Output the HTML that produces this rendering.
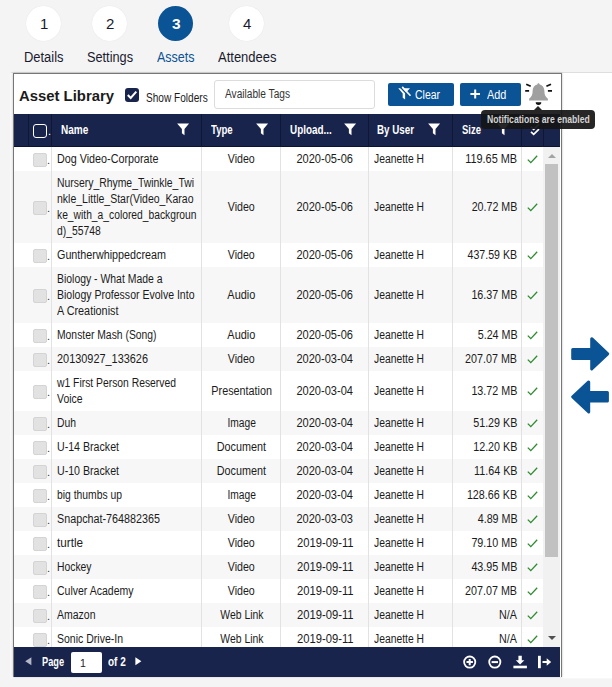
<!DOCTYPE html>
<html lang="en"><head><meta charset="utf-8"><title>Asset Library</title>
<style>
*{box-sizing:border-box;margin:0;padding:0}
html,body{width:612px;height:687px;overflow:hidden}
body{background:#f4f4f4;font-family:"Liberation Sans",sans-serif;color:#1d1d1d;position:relative}
.t{display:inline-block;white-space:pre}
.white{position:absolute;left:10px;top:72px;width:602px;height:607px;background:#fff;border-top:1px solid #dedede;border-bottom:1px solid #f8f8f8;border-left:2px solid #f9f9f9}
.step{position:absolute;top:6px;width:35px;height:35px;border-radius:50%;background:#fff;box-shadow:0 0 1px rgba(0,0,0,.12);text-align:center;line-height:36px;font-size:15px;color:#1a1a2e;padding-left:1.5px}
.step.on{background:#0a5394;box-shadow:none;color:#fff;font-weight:bold;font-size:15.5px}
.slabel{position:absolute;top:49px;font-size:14px;color:#1a1a2e;line-height:16px;white-space:nowrap}
.slabel.on{color:#0a5394}
.panel{position:absolute;left:13px;top:73px;width:549px;height:604px;background:#fff;border:1px solid #777;border-bottom:none;box-shadow:0 0 2px rgba(0,0,0,.28)}
.abs{position:absolute;white-space:nowrap}
.title{left:5px;top:11.8px;font-size:15.5px;font-weight:bold;color:#1b1b1b;line-height:20px}
.chk{position:absolute;left:111px;top:14px;width:14px;height:14px;background:#19244d;border-radius:3px}
.sf{left:131.7px;top:16px;font-size:12px;line-height:16px;color:#1b1b1b}
.tags{position:absolute;left:200px;top:6px;width:161px;height:29px;border:1px solid #dcdcdc;border-radius:3px;background:#fff;font-size:12px;line-height:27px;padding-left:10px;color:#333;white-space:nowrap}
.btn{position:absolute;top:9px;height:23px;background:#0a5394;border-radius:2px;color:#fff;font-size:12px;line-height:24px;white-space:nowrap}
.btn .t{position:absolute;top:0}
.thead{position:absolute;left:0;top:40px;width:546px;height:33px;background:#19244d;color:#fff;border-bottom:1px solid #0b1232}
.th{position:absolute;top:0;height:33px;border-left:1px solid #0f1735;font-size:12px;font-weight:bold;line-height:32px;white-space:nowrap}
.th svg{position:absolute;top:8.5px}
.tbody{position:absolute;left:0;top:73px;width:529px;height:500px;overflow:hidden;background:#fff}
.row{position:absolute;left:0;width:529px;background:#fff}
.row.alt{background:#f7f7f7}
.c{position:absolute;top:0;height:100%;border-left:1px solid #e2e2e2;font-size:12px;line-height:16px;white-space:nowrap;display:flex;align-items:center;color:#1b1b1b}
.ln{height:16px}
.c0{left:0;width:15px;border-left:none}
.c1{left:14px;width:23px;border-left:none}
.c2{left:37px;width:150px;padding-left:5.3px}
.c3{left:187px;width:79px;justify-content:center;padding-left:1px}
.c4{left:266px;width:88px;justify-content:center;padding-left:1px}
.c5{left:354px;width:84px;padding-left:5.3px}
.c6{left:438px;width:69px;justify-content:flex-end;padding-right:3.5px}
.c7{left:507px;width:22px;justify-content:center}
.cb{position:absolute;left:5px;top:50%;margin-top:-6px;width:14px;height:14px;background:#e2e2e2;border:1px solid #d4d4d4;border-radius:2px}
.dot{position:absolute;left:19px;top:50%;margin-top:-7.5px;font-size:11px;line-height:16px;color:#333}
.sbar{position:absolute;left:529px;top:73px;width:17px;height:500px;background:#f1f1f1}
.thumb{position:absolute;left:2px;top:17px;width:13px;height:393px;background:#c1c1c1}
.foot{position:absolute;left:0;top:573px;width:546px;height:30px;background:#19244d;color:#fff;font-size:12px;font-weight:bold;line-height:30px}
.foot .t{position:absolute;top:0}
.pg{position:absolute;left:56.5px;top:5px;width:31px;height:21px;background:#fff;border-radius:2px;color:#222;font-weight:normal;font-size:10.5px;line-height:23px;padding-left:9.5px}
.tip{position:absolute;left:481px;top:110px;width:114px;height:19px;background:rgba(22,22,22,.93);border-radius:4px;color:#d4d4d4;font-size:10px;font-weight:bold;line-height:19px;white-space:nowrap}
.tip .t{position:absolute;left:6px;top:0}
.tip:before{content:"";position:absolute;left:53px;top:-4px;border:4.5px solid transparent;border-top:none;border-bottom:4px solid rgba(22,22,22,.93)}
</style></head><body>
<div class="white"></div>
<div class="step" style="left:26px">1</div>
<div class="step" style="left:92px">2</div>
<div class="step on" style="left:158px">3</div>
<div class="step" style="left:229px">4</div>
<div class="slabel" style="left:24px"><span class="t" style="transform:scaleX(0.9230);transform-origin:left center;">Details</span></div>
<div class="slabel" style="left:87px"><span class="t" style="transform:scaleX(0.9092);transform-origin:left center;">Settings</span></div>
<div class="slabel on" style="left:157px"><span class="t" style="transform:scaleX(0.8925);transform-origin:left center;">Assets</span></div>
<div class="slabel" style="left:218px"><span class="t" style="transform:scaleX(0.9277);transform-origin:left center;">Attendees</span></div>
<div class="panel">
<div class="abs title"><span class="t" style="transform:scaleX(0.9588);transform-origin:left center;">Asset Library</span></div>
<div class="chk"><svg width="14" height="14" viewBox="0 0 14 14"><path d="M2.8 7 L5.7 10 L11.3 3.7" fill="none" stroke="#fff" stroke-width="2"/></svg></div>
<div class="abs sf"><span class="t" style="transform:scaleX(0.8409);transform-origin:left center;">Show Folders</span></div>
<div class="tags"><span class="t" style="transform:scaleX(0.8447);transform-origin:left center;">Available Tags</span></div>
<div class="btn" style="left:374px;width:66px"><span class="t" style="transform:scaleX(0.8715);transform-origin:left center;left:27.4px">Clear</span><svg style="position:absolute;left:8px;top:1px" width="18" height="18" viewBox="0 0 18 18"><path d="M2.3 4.3 H14 L9.1 9.6 V15.6 L6.7 13.8 V9.6 Z" fill="#fff"/><path d="M4.4 3.2 L13.4 12.75" stroke="#0a5394" stroke-width="1.5"/><path d="M6.2 2.9 L14.5 11.7" stroke="#fff" stroke-width="1.6"/></svg></div>
<div class="btn" style="left:446px;width:61px"><span class="t" style="transform:scaleX(0.9083);transform-origin:left center;left:26.7px">Add</span><svg style="position:absolute;left:10px;top:6px" width="11" height="11" viewBox="0 0 11 11"><path d="M5.2 0.4 V9.4 M0.4 4.9 H10" stroke="#fff" stroke-width="2"/></svg></div>
<svg style="position:absolute;left:508px;top:6px" width="36" height="28" viewBox="0 0 36 28"><path d="M15.3 4.6 C15.3 3.8 15.8 3.2 16.5 3.2 C17.2 3.2 17.7 3.8 17.7 4.6 C20.6 5.3 22.4 7.8 22.4 11 C22.4 14.5 23 16.4 25.9 18.8 L25.9 20.6 L7.1 20.6 L7.1 18.8 C10 16.4 10.6 14.5 10.6 11 C10.6 7.8 12.4 5.3 15.3 4.6 Z" fill="#a0a0a0"/><path d="M13.7 22.2 H19.3 A2.8 2.7 0 0 1 13.7 22.2 Z" fill="#111"/><path d="M3.2 10.9 H7.1 M25.9 10.9 H30 M4.2 4.2 L8.7 6.3 M24.4 6.3 L29 4.2" stroke="#111" stroke-width="1.7" fill="none"/></svg>
<div class="thead">
<div class="th" style="left:0;width:15px;border-left:none"></div>
<div class="th" style="left:14px;width:23px"><span style="position:absolute;left:4px;top:10px;width:14px;height:14px;border:1.5px solid #fff;border-radius:3px"></span><span style="position:absolute;left:19px;top:0.5px;font-weight:normal;font-size:11px">.</span></div>
<div class="th" style="left:37px;width:150px;padding-left:9px"><span class="t" style="transform:scaleX(0.8352);transform-origin:left center;">Name</span><svg style="left:124.7px" width="13" height="13" viewBox="0 0 13 13"><path d="M0.1 0.4 H12.1 L7.5 5.9 V12.2 L4.9 10.2 V5.9 Z" fill="#fff"/></svg></div>
<div class="th" style="left:187px;width:79px;padding-left:9px"><span class="t" style="transform:scaleX(0.8000);transform-origin:left center;">Type</span><svg style="left:54px" width="13" height="13" viewBox="0 0 13 13"><path d="M0.1 0.4 H12.1 L7.5 5.9 V12.2 L4.9 10.2 V5.9 Z" fill="#fff"/></svg></div>
<div class="th" style="left:266px;width:88px;padding-left:9px"><span class="t" style="transform:scaleX(0.8229);transform-origin:left center;">Upload...</span><svg style="left:63px" width="13" height="13" viewBox="0 0 13 13"><path d="M0.1 0.4 H12.1 L7.5 5.9 V12.2 L4.9 10.2 V5.9 Z" fill="#fff"/></svg></div>
<div class="th" style="left:354px;width:84px;padding-left:8.3px"><span class="t" style="transform:scaleX(0.8157);transform-origin:left center;">By User</span><svg style="left:59.3px" width="13" height="13" viewBox="0 0 13 13"><path d="M0.1 0.4 H12.1 L7.5 5.9 V12.2 L4.9 10.2 V5.9 Z" fill="#fff"/></svg></div>
<div class="th" style="left:438px;width:69px;padding-left:8.7px"><span class="t" style="transform:scaleX(0.7912);transform-origin:left center;">Size</span><svg style="left:44px" width="13" height="13" viewBox="0 0 13 13"><path d="M0.1 0.4 H12.1 L7.5 5.9 V12.2 L4.9 10.2 V5.9 Z" fill="#fff"/></svg></div>
<div class="th" style="left:507px;width:22px"><svg style="left:7.5px;top:9px" width="11" height="13" viewBox="0 0 11 13"><path d="M1 3.8 L3.7 6.4 L9 1.2 M1 8.8 L3.7 11.4 L9 6.2" fill="none" stroke="#fff" stroke-width="1.7"/></svg></div>
<div class="th" style="left:529px;width:17px"></div>
</div>
<div class="tbody">
<div class="row" style="top:0px;height:24px"><div class="c c0"></div><div class="c c1"><span class="cb"></span><span class="dot">.</span></div><div class="c c2"><div><div class="ln"><span class="t" style="transform:scaleX(0.8967);transform-origin:left center;">Dog Video-Corporate</span></div></div></div><div class="c c3"><span class="t" style="transform:scaleX(0.8857);transform-origin:center center;">Video</span></div><div class="c c4"><span class="t" style="transform:scaleX(0.9220);transform-origin:center center;">2020-05-06</span></div><div class="c c5"><span class="t" style="transform:scaleX(0.8614);transform-origin:left center;">Jeanette H</span></div><div class="c c6"><span class="t" style="transform:scaleX(0.9098);transform-origin:right center;">119.65 MB</span></div><div class="c c7"><svg width="11" height="9" viewBox="0 0 11 9"><path d="M0.8 4.6 L3.8 7.6 L10.2 0.8" fill="none" stroke="#2e8b2e" stroke-width="1.3"/></svg></div></div>
<div class="row alt" style="top:24px;height:72px"><div class="c c0"></div><div class="c c1"><span class="cb"></span><span class="dot">.</span></div><div class="c c2"><div><div class="ln"><span class="t" style="transform:scaleX(0.8667);transform-origin:left center;">Nursery_Rhyme_Twinkle_Twi</span></div><div class="ln"><span class="t" style="transform:scaleX(0.8756);transform-origin:left center;">nkle_Little_Star(Video_Karao</span></div><div class="ln"><span class="t" style="transform:scaleX(0.8570);transform-origin:left center;">ke_with_a_colored_backgroun</span></div><div class="ln"><span class="t" style="transform:scaleX(0.8626);transform-origin:left center;">d)_55748</span></div></div></div><div class="c c3"><span class="t" style="transform:scaleX(0.8857);transform-origin:center center;">Video</span></div><div class="c c4"><span class="t" style="transform:scaleX(0.9220);transform-origin:center center;">2020-05-06</span></div><div class="c c5"><span class="t" style="transform:scaleX(0.8614);transform-origin:left center;">Jeanette H</span></div><div class="c c6"><span class="t" style="transform:scaleX(0.8905);transform-origin:right center;">20.72 MB</span></div><div class="c c7"><svg width="11" height="9" viewBox="0 0 11 9"><path d="M0.8 4.6 L3.8 7.6 L10.2 0.8" fill="none" stroke="#2e8b2e" stroke-width="1.3"/></svg></div></div>
<div class="row" style="top:96px;height:24px"><div class="c c0"></div><div class="c c1"><span class="cb"></span><span class="dot">.</span></div><div class="c c2"><div><div class="ln"><span class="t" style="transform:scaleX(0.8978);transform-origin:left center;">Guntherwhippedcream</span></div></div></div><div class="c c3"><span class="t" style="transform:scaleX(0.8857);transform-origin:center center;">Video</span></div><div class="c c4"><span class="t" style="transform:scaleX(0.9220);transform-origin:center center;">2020-05-06</span></div><div class="c c5"><span class="t" style="transform:scaleX(0.8614);transform-origin:left center;">Jeanette H</span></div><div class="c c6"><span class="t" style="transform:scaleX(0.8832);transform-origin:right center;">437.59 KB</span></div><div class="c c7"><svg width="11" height="9" viewBox="0 0 11 9"><path d="M0.8 4.6 L3.8 7.6 L10.2 0.8" fill="none" stroke="#2e8b2e" stroke-width="1.3"/></svg></div></div>
<div class="row alt" style="top:120px;height:56px"><div class="c c0"></div><div class="c c1"><span class="cb"></span><span class="dot">.</span></div><div class="c c2"><div><div class="ln"><span class="t" style="transform:scaleX(0.8691);transform-origin:left center;">Biology - What Made a</span></div><div class="ln"><span class="t" style="transform:scaleX(0.8772);transform-origin:left center;">Biology Professor Evolve Into</span></div><div class="ln"><span class="t" style="transform:scaleX(0.9038);transform-origin:left center;">A Creationist</span></div></div></div><div class="c c3"><span class="t" style="transform:scaleX(0.9120);transform-origin:center center;">Audio</span></div><div class="c c4"><span class="t" style="transform:scaleX(0.9220);transform-origin:center center;">2020-05-06</span></div><div class="c c5"><span class="t" style="transform:scaleX(0.8614);transform-origin:left center;">Jeanette H</span></div><div class="c c6"><span class="t" style="transform:scaleX(0.8950);transform-origin:right center;">16.37 MB</span></div><div class="c c7"><svg width="11" height="9" viewBox="0 0 11 9"><path d="M0.8 4.6 L3.8 7.6 L10.2 0.8" fill="none" stroke="#2e8b2e" stroke-width="1.3"/></svg></div></div>
<div class="row" style="top:176px;height:24px"><div class="c c0"></div><div class="c c1"><span class="cb"></span><span class="dot">.</span></div><div class="c c2"><div><div class="ln"><span class="t" style="transform:scaleX(0.8623);transform-origin:left center;">Monster Mash (Song)</span></div></div></div><div class="c c3"><span class="t" style="transform:scaleX(0.9120);transform-origin:center center;">Audio</span></div><div class="c c4"><span class="t" style="transform:scaleX(0.9220);transform-origin:center center;">2020-05-06</span></div><div class="c c5"><span class="t" style="transform:scaleX(0.8614);transform-origin:left center;">Jeanette H</span></div><div class="c c6"><span class="t" style="transform:scaleX(0.8950);transform-origin:right center;">5.24 MB</span></div><div class="c c7"><svg width="11" height="9" viewBox="0 0 11 9"><path d="M0.8 4.6 L3.8 7.6 L10.2 0.8" fill="none" stroke="#2e8b2e" stroke-width="1.3"/></svg></div></div>
<div class="row alt" style="top:200px;height:24px"><div class="c c0"></div><div class="c c1"><span class="cb"></span><span class="dot">.</span></div><div class="c c2"><div><div class="ln"><span class="t" style="transform:scaleX(0.9090);transform-origin:left center;">20130927_133626</span></div></div></div><div class="c c3"><span class="t" style="transform:scaleX(0.8857);transform-origin:center center;">Video</span></div><div class="c c4"><span class="t" style="transform:scaleX(0.9220);transform-origin:center center;">2020-03-04</span></div><div class="c c5"><span class="t" style="transform:scaleX(0.8614);transform-origin:left center;">Jeanette H</span></div><div class="c c6"><span class="t" style="transform:scaleX(0.8950);transform-origin:right center;">207.07 MB</span></div><div class="c c7"><svg width="11" height="9" viewBox="0 0 11 9"><path d="M0.8 4.6 L3.8 7.6 L10.2 0.8" fill="none" stroke="#2e8b2e" stroke-width="1.3"/></svg></div></div>
<div class="row" style="top:224px;height:40px"><div class="c c0"></div><div class="c c1"><span class="cb"></span><span class="dot">.</span></div><div class="c c2"><div><div class="ln"><span class="t" style="transform:scaleX(0.8620);transform-origin:left center;">w1 First Person Reserved</span></div><div class="ln"><span class="t" style="transform:scaleX(0.8685);transform-origin:left center;">Voice</span></div></div></div><div class="c c3"><span class="t" style="transform:scaleX(0.9015);transform-origin:center center;">Presentation</span></div><div class="c c4"><span class="t" style="transform:scaleX(0.9220);transform-origin:center center;">2020-03-04</span></div><div class="c c5"><span class="t" style="transform:scaleX(0.8614);transform-origin:left center;">Jeanette H</span></div><div class="c c6"><span class="t" style="transform:scaleX(0.8950);transform-origin:right center;">13.72 MB</span></div><div class="c c7"><svg width="11" height="9" viewBox="0 0 11 9"><path d="M0.8 4.6 L3.8 7.6 L10.2 0.8" fill="none" stroke="#2e8b2e" stroke-width="1.3"/></svg></div></div>
<div class="row alt" style="top:264px;height:24px"><div class="c c0"></div><div class="c c1"><span class="cb"></span><span class="dot">.</span></div><div class="c c2"><div><div class="ln"><span class="t" style="transform:scaleX(0.8630);transform-origin:left center;">Duh</span></div></div></div><div class="c c3"><span class="t" style="transform:scaleX(0.8543);transform-origin:center center;">Image</span></div><div class="c c4"><span class="t" style="transform:scaleX(0.9220);transform-origin:center center;">2020-03-04</span></div><div class="c c5"><span class="t" style="transform:scaleX(0.8614);transform-origin:left center;">Jeanette H</span></div><div class="c c6"><span class="t" style="transform:scaleX(0.8950);transform-origin:right center;">51.29 KB</span></div><div class="c c7"><svg width="11" height="9" viewBox="0 0 11 9"><path d="M0.8 4.6 L3.8 7.6 L10.2 0.8" fill="none" stroke="#2e8b2e" stroke-width="1.3"/></svg></div></div>
<div class="row" style="top:288px;height:24px"><div class="c c0"></div><div class="c c1"><span class="cb"></span><span class="dot">.</span></div><div class="c c2"><div><div class="ln"><span class="t" style="transform:scaleX(0.8853);transform-origin:left center;">U-14 Bracket</span></div></div></div><div class="c c3"><span class="t" style="transform:scaleX(0.9003);transform-origin:center center;">Document</span></div><div class="c c4"><span class="t" style="transform:scaleX(0.9220);transform-origin:center center;">2020-03-04</span></div><div class="c c5"><span class="t" style="transform:scaleX(0.8614);transform-origin:left center;">Jeanette H</span></div><div class="c c6"><span class="t" style="transform:scaleX(0.8950);transform-origin:right center;">12.20 KB</span></div><div class="c c7"><svg width="11" height="9" viewBox="0 0 11 9"><path d="M0.8 4.6 L3.8 7.6 L10.2 0.8" fill="none" stroke="#2e8b2e" stroke-width="1.3"/></svg></div></div>
<div class="row alt" style="top:312px;height:24px"><div class="c c0"></div><div class="c c1"><span class="cb"></span><span class="dot">.</span></div><div class="c c2"><div><div class="ln"><span class="t" style="transform:scaleX(0.8853);transform-origin:left center;">U-10 Bracket</span></div></div></div><div class="c c3"><span class="t" style="transform:scaleX(0.9003);transform-origin:center center;">Document</span></div><div class="c c4"><span class="t" style="transform:scaleX(0.9220);transform-origin:center center;">2020-03-04</span></div><div class="c c5"><span class="t" style="transform:scaleX(0.8614);transform-origin:left center;">Jeanette H</span></div><div class="c c6"><span class="t" style="transform:scaleX(0.8950);transform-origin:right center;">11.64 KB</span></div><div class="c c7"><svg width="11" height="9" viewBox="0 0 11 9"><path d="M0.8 4.6 L3.8 7.6 L10.2 0.8" fill="none" stroke="#2e8b2e" stroke-width="1.3"/></svg></div></div>
<div class="row" style="top:336px;height:24px"><div class="c c0"></div><div class="c c1"><span class="cb"></span><span class="dot">.</span></div><div class="c c2"><div><div class="ln"><span class="t" style="transform:scaleX(0.8622);transform-origin:left center;">big thumbs up</span></div></div></div><div class="c c3"><span class="t" style="transform:scaleX(0.8543);transform-origin:center center;">Image</span></div><div class="c c4"><span class="t" style="transform:scaleX(0.9220);transform-origin:center center;">2020-03-04</span></div><div class="c c5"><span class="t" style="transform:scaleX(0.8614);transform-origin:left center;">Jeanette H</span></div><div class="c c6"><span class="t" style="transform:scaleX(0.8950);transform-origin:right center;">128.66 KB</span></div><div class="c c7"><svg width="11" height="9" viewBox="0 0 11 9"><path d="M0.8 4.6 L3.8 7.6 L10.2 0.8" fill="none" stroke="#2e8b2e" stroke-width="1.3"/></svg></div></div>
<div class="row alt" style="top:360px;height:24px"><div class="c c0"></div><div class="c c1"><span class="cb"></span><span class="dot">.</span></div><div class="c c2"><div><div class="ln"><span class="t" style="transform:scaleX(0.8974);transform-origin:left center;">Snapchat-764882365</span></div></div></div><div class="c c3"><span class="t" style="transform:scaleX(0.8857);transform-origin:center center;">Video</span></div><div class="c c4"><span class="t" style="transform:scaleX(0.9220);transform-origin:center center;">2020-03-03</span></div><div class="c c5"><span class="t" style="transform:scaleX(0.8614);transform-origin:left center;">Jeanette H</span></div><div class="c c6"><span class="t" style="transform:scaleX(0.8950);transform-origin:right center;">4.89 MB</span></div><div class="c c7"><svg width="11" height="9" viewBox="0 0 11 9"><path d="M0.8 4.6 L3.8 7.6 L10.2 0.8" fill="none" stroke="#2e8b2e" stroke-width="1.3"/></svg></div></div>
<div class="row" style="top:384px;height:24px"><div class="c c0"></div><div class="c c1"><span class="cb"></span><span class="dot">.</span></div><div class="c c2"><div><div class="ln"><span class="t" style="transform:scaleX(0.9742);transform-origin:left center;">turtle</span></div></div></div><div class="c c3"><span class="t" style="transform:scaleX(0.8857);transform-origin:center center;">Video</span></div><div class="c c4"><span class="t" style="transform:scaleX(0.9355);transform-origin:center center;">2019-09-11</span></div><div class="c c5"><span class="t" style="transform:scaleX(0.8614);transform-origin:left center;">Jeanette H</span></div><div class="c c6"><span class="t" style="transform:scaleX(0.8950);transform-origin:right center;">79.10 MB</span></div><div class="c c7"><svg width="11" height="9" viewBox="0 0 11 9"><path d="M0.8 4.6 L3.8 7.6 L10.2 0.8" fill="none" stroke="#2e8b2e" stroke-width="1.3"/></svg></div></div>
<div class="row alt" style="top:408px;height:24px"><div class="c c0"></div><div class="c c1"><span class="cb"></span><span class="dot">.</span></div><div class="c c2"><div><div class="ln"><span class="t" style="transform:scaleX(0.8622);transform-origin:left center;">Hockey</span></div></div></div><div class="c c3"><span class="t" style="transform:scaleX(0.8857);transform-origin:center center;">Video</span></div><div class="c c4"><span class="t" style="transform:scaleX(0.9355);transform-origin:center center;">2019-09-11</span></div><div class="c c5"><span class="t" style="transform:scaleX(0.8614);transform-origin:left center;">Jeanette H</span></div><div class="c c6"><span class="t" style="transform:scaleX(0.8950);transform-origin:right center;">43.95 MB</span></div><div class="c c7"><svg width="11" height="9" viewBox="0 0 11 9"><path d="M0.8 4.6 L3.8 7.6 L10.2 0.8" fill="none" stroke="#2e8b2e" stroke-width="1.3"/></svg></div></div>
<div class="row" style="top:432px;height:24px"><div class="c c0"></div><div class="c c1"><span class="cb"></span><span class="dot">.</span></div><div class="c c2"><div><div class="ln"><span class="t" style="transform:scaleX(0.8755);transform-origin:left center;">Culver Academy</span></div></div></div><div class="c c3"><span class="t" style="transform:scaleX(0.8857);transform-origin:center center;">Video</span></div><div class="c c4"><span class="t" style="transform:scaleX(0.9355);transform-origin:center center;">2019-09-11</span></div><div class="c c5"><span class="t" style="transform:scaleX(0.8614);transform-origin:left center;">Jeanette H</span></div><div class="c c6"><span class="t" style="transform:scaleX(0.8950);transform-origin:right center;">207.07 MB</span></div><div class="c c7"><svg width="11" height="9" viewBox="0 0 11 9"><path d="M0.8 4.6 L3.8 7.6 L10.2 0.8" fill="none" stroke="#2e8b2e" stroke-width="1.3"/></svg></div></div>
<div class="row alt" style="top:456px;height:24px"><div class="c c0"></div><div class="c c1"><span class="cb"></span><span class="dot">.</span></div><div class="c c2"><div><div class="ln"><span class="t" style="transform:scaleX(0.8744);transform-origin:left center;">Amazon</span></div></div></div><div class="c c3"><span class="t" style="transform:scaleX(0.8683);transform-origin:center center;">Web Link</span></div><div class="c c4"><span class="t" style="transform:scaleX(0.9355);transform-origin:center center;">2019-09-11</span></div><div class="c c5"><span class="t" style="transform:scaleX(0.8614);transform-origin:left center;">Jeanette H</span></div><div class="c c6"><span class="t" style="transform:scaleX(0.8950);transform-origin:right center;">N/A</span></div><div class="c c7"><svg width="11" height="9" viewBox="0 0 11 9"><path d="M0.8 4.6 L3.8 7.6 L10.2 0.8" fill="none" stroke="#2e8b2e" stroke-width="1.3"/></svg></div></div>
<div class="row" style="top:480px;height:24px"><div class="c c0"></div><div class="c c1"><span class="cb"></span><span class="dot">.</span></div><div class="c c2"><div><div class="ln"><span class="t" style="transform:scaleX(0.8758);transform-origin:left center;">Sonic Drive-In</span></div></div></div><div class="c c3"><span class="t" style="transform:scaleX(0.8683);transform-origin:center center;">Web Link</span></div><div class="c c4"><span class="t" style="transform:scaleX(0.9355);transform-origin:center center;">2019-09-11</span></div><div class="c c5"><span class="t" style="transform:scaleX(0.8614);transform-origin:left center;">Jeanette H</span></div><div class="c c6"><span class="t" style="transform:scaleX(0.8950);transform-origin:right center;">N/A</span></div><div class="c c7"><svg width="11" height="9" viewBox="0 0 11 9"><path d="M0.8 4.6 L3.8 7.6 L10.2 0.8" fill="none" stroke="#2e8b2e" stroke-width="1.3"/></svg></div></div>
</div>
<div class="sbar"><div class="thumb"></div>
<svg style="position:absolute;left:4.5px;top:7px" width="8" height="4" viewBox="0 0 8 4"><path d="M0 4 L4 0 L8 4Z" fill="#a3a3a3"/></svg>
<svg style="position:absolute;left:4.5px;top:488.5px" width="8" height="4" viewBox="0 0 8 4"><path d="M0 0 L4 4 L8 0Z" fill="#505050"/></svg>
</div>
<div class="foot">
<svg style="position:absolute;left:11px;top:10px" width="7" height="9" viewBox="0 0 7 9"><path d="M6.4 0.3 L0.2 4.3 L6.4 8.3Z" fill="#b4b8c6"/></svg>
<span class="t" style="transform:scaleX(0.7669);transform-origin:left center;left:28px">Page</span>
<div class="pg">1</div>
<span class="t" style="transform:scaleX(0.8340);transform-origin:left center;left:93.7px">of 2</span>
<svg style="position:absolute;left:121px;top:10px" width="7" height="9" viewBox="0 0 7 9"><path d="M0.4 0.3 L6.4 4.3 L0.4 8.3Z" fill="#fff"/></svg>
<svg style="position:absolute;left:448px;top:7px" width="16" height="16" viewBox="0 0 16 16"><circle cx="7.7" cy="8.1" r="5.6" fill="none" stroke="#fff" stroke-width="1.8"/><path d="M4.5 8.1 H10.9 M7.7 4.9 V11.3" stroke="#fff" stroke-width="2"/></svg>
<svg style="position:absolute;left:473px;top:7px" width="16" height="16" viewBox="0 0 16 16"><circle cx="7.8" cy="8.1" r="5.6" fill="none" stroke="#fff" stroke-width="1.8"/><path d="M4.6 8.1 H11" stroke="#fff" stroke-width="2"/></svg>
<svg style="position:absolute;left:499px;top:7px" width="15" height="16" viewBox="0 0 15 16"><path d="M5.4 1.8 H8.8 V6.3 H11.4 L7.1 10.4 L2.8 6.3 H5.4 Z" fill="#fff"/><rect x="0.4" y="11.7" width="13.5" height="2.6" fill="#fff"/></svg>
<svg style="position:absolute;left:523px;top:7px" width="16" height="16" viewBox="0 0 16 16"><rect x="1" y="1.8" width="2.8" height="12.4" fill="#fff"/><path d="M5.5 7.1 H9.7 V4.3 L14.2 8 L9.7 11.7 V8.9 H5.5 Z" fill="#fff"/></svg>
</div>
</div>
<svg style="position:absolute;left:571px;top:337px" width="40" height="35" viewBox="0 0 40 35"><path d="M1.7 12.6 H20.7 V1.7 L36.7 16.8 L20.7 31.9 V21.4 H1.7 Z" fill="#0a5394" stroke="#0a5394" stroke-width="3" stroke-linejoin="round"/></svg>
<svg style="position:absolute;left:571px;top:380px" width="40" height="35" viewBox="0 0 40 35"><path d="M36.4 12.4 H17.7 V1.9 L1.7 16.8 L17.7 32 V20.9 H36.4 Z" fill="#0a5394" stroke="#0a5394" stroke-width="3" stroke-linejoin="round"/></svg>
<div class="tip"><span class="t" style="transform:scaleX(0.8644);transform-origin:left center;">Notifications are enabled</span></div>
</body></html>
